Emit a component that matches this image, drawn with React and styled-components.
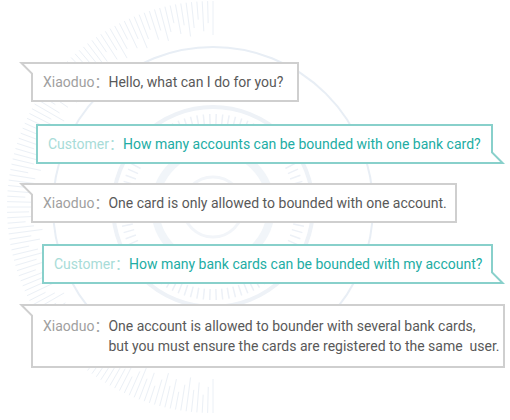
import React from 'react';
import styled, { createGlobalStyle, css } from 'styled-components';

const GlobalStyle = createGlobalStyle`
  html, body {
    margin: 0;
    padding: 0;
    background: #ffffff;
  }
  body {
    font-family: Roboto, "Noto Sans CJK SC", sans-serif;
  }
`;

const Stage = styled.div`
  position: relative;
  width: 510px;
  height: 420px;
  overflow: hidden;
  background: #ffffff;
`;

const Backdrop = styled.svg`
  position: absolute;
  left: 0;
  top: 0;
  width: 510px;
  height: 420px;
  pointer-events: none;
`;

const Thread = styled.div`
  position: relative;
  display: flex;
  flex-direction: column;
  align-items: flex-start;
  padding-top: 62px;
`;

const palette = {
  bot: { border: '#cfcfcf', label: '#a0a0a0', text: '#595959' },
  user: { border: '#88d0cb', label: '#a8dcd8', text: '#22ada4' },
};

// little corner tail: top-left for Xiaoduo, bottom-right for the customer
const botTail = css`
  &::before,
  &::after {
    left: -14px;
    top: -2px;
  }
  &::before {
    background: ${palette.bot.border};
    clip-path: polygon(0 0, 100% 0, 100% 100%);
  }
  &::after {
    background: #ffffff;
    clip-path: polygon(4.8px 2px, 14px 2px, 14px 11.2px);
  }
`;

const userTail = css`
  &::before,
  &::after {
    right: -14px;
    bottom: -2px;
  }
  &::before {
    background: ${palette.user.border};
    clip-path: polygon(0 0, 100% 100%, 0 100%);
  }
  &::after {
    background: #ffffff;
    clip-path: polygon(0 2.8px, 9.2px 12px, 0 12px);
  }
`;

const Bubble = styled.div`
  position: relative;
  box-sizing: border-box;
  display: flex;
  margin-top: ${(p) => p.$gap}px;
  margin-left: ${(p) => p.$offset}px;
  width: ${(p) => p.$width}px;
  padding: ${(p) => p.$pad}px 10px;
  border: 2px solid ${(p) => palette[p.$who].border};
  background: #ffffff;
  font-size: 14px;
  line-height: 20px;

  &::before,
  &::after {
    content: '';
    position: absolute;
    width: 14px;
    height: 14px;
  }

  ${(p) => (p.$who === 'bot' ? botTail : userTail)}
`;

const Speaker = styled.span`
  flex-shrink: 0;
  white-space: nowrap;
  color: ${(p) => palette[p.$who].label};
`;

const Message = styled.span`
  white-space: pre;
  color: ${(p) => palette[p.$who].text};
`;

const messages = [
  { who: 'bot', gap: 0, offset: 31, width: 268, pad: 8, text: 'Hello, what can I do for you?' },
  { who: 'user', gap: 22, offset: 36, width: 457, pad: 8, text: 'How many accounts can be bounded with one bank card?' },
  { who: 'bot', gap: 19, offset: 31, width: 426, pad: 8, text: 'One card is only allowed to bounded with one account.' },
  { who: 'user', gap: 21, offset: 42, width: 451, pad: 8, text: 'How many bank cards can be bounded with my account?' },
  {
    who: 'bot',
    gap: 20,
    offset: 31,
    width: 474,
    pad: 10,
    text: 'One account is allowed to bounder with several bank cards,\nbut you must ensure the cards are registered to the same  user.',
  },
];

const CX = 213;
const CY = 207;

const ray = (deg, r1, r2) => {
  const a = (deg * Math.PI) / 180;
  return {
    x1: CX + r1 * Math.cos(a),
    y1: CY + r1 * Math.sin(a),
    x2: CX + r2 * Math.cos(a),
    y2: CY + r2 * Math.sin(a),
  };
};

const outerTicks = Array.from({ length: 121 }, (_, i) => {
  const deg = 90 + i * 1.5;
  const inner = 172 + ((i * 7) % 5) * 4;
  return ray(deg, inner, 206);
});

const innerTicks = Array.from({ length: 90 }, (_, i) => ray(i * 4, 82, 93));

function Decoration() {
  return (
    <Backdrop viewBox="0 0 510 420">
      <g stroke="#ebf0f6" strokeWidth="1">
        {outerTicks.map((t, i) => (
          <line key={i} {...t} />
        ))}
      </g>
      <circle cx={CX} cy={CY} r="160" fill="none" stroke="#e8eef5" strokeWidth="2" />
      <circle cx={CX} cy={CY} r="100" fill="none" stroke="#eef2f7" strokeWidth="4" />
      <g stroke="#edf1f7" strokeWidth="1.5">
        {innerTicks.map((t, i) => (
          <line key={i} {...t} />
        ))}
      </g>
      <circle cx={CX} cy={CY} r="58" fill="none" stroke="#f1f5f9" strokeWidth="8" />
      <circle cx={CX} cy={CY} r="30" fill="none" stroke="#f2f5f9" strokeWidth="3" />
    </Backdrop>
  );
}

export default function App() {
  return (
    <>
      <GlobalStyle />
      <Stage>
        <Decoration />
        <Thread>
          {messages.map((m, i) => (
            <Bubble key={i} $who={m.who} $gap={m.gap} $offset={m.offset} $width={m.width} $pad={m.pad}>
              <Speaker $who={m.who}>{m.who === 'bot' ? 'Xiaoduo：' : 'Customer：'}</Speaker>
              <Message $who={m.who}>{m.text}</Message>
            </Bubble>
          ))}
        </Thread>
      </Stage>
    </>
  );
}
